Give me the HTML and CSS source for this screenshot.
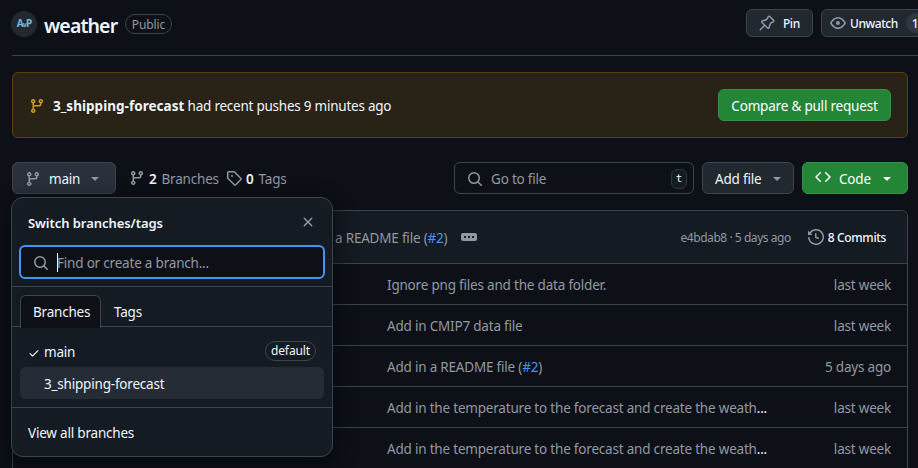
FILE: index.html
```html
<!DOCTYPE html>
<html lang="en">
<head>
<meta charset="utf-8">
<title>weather</title>
<link rel="stylesheet" href="styles.css">
</head>
<body>
<svg class="sprite" aria-hidden="true">
  <symbol id="branch" viewBox="0 0 16 16"><path d="M9.5 3.25a2.25 2.25 0 1 1 3 2.122V6A2.5 2.5 0 0 1 10 8.5H6a1 1 0 0 0-1 1v1.128a2.251 2.251 0 1 1-1.5 0V5.372a2.25 2.25 0 1 1 1.5 0v1.836A2.493 2.493 0 0 1 6 7h4a1 1 0 0 0 1-1v-.628A2.25 2.25 0 0 1 9.5 3.25Zm-6 0a.75.75 0 1 0 1.5 0 .75.75 0 0 0-1.5 0Zm8.25-.75a.75.75 0 1 0 0 1.5.75.75 0 0 0 0-1.5ZM4.25 12a.75.75 0 1 0 0 1.5.75.75 0 0 0 0-1.5Z"/></symbol>
  <symbol id="search" viewBox="0 0 16 16"><path d="M10.68 11.74a6 6 0 0 1-7.922-8.982 6 6 0 0 1 8.982 7.922l3.04 3.04a.749.749 0 0 1-.326 1.275.749.749 0 0 1-.734-.215ZM11.5 7a4.499 4.499 0 1 0-8.997 0A4.499 4.499 0 0 0 11.5 7Z"/></symbol>
  <symbol id="tag" viewBox="0 0 16 16"><path d="M1 7.775V2.75C1 1.784 1.784 1 2.75 1h5.025c.464 0 .91.184 1.238.513l6.25 6.25a1.75 1.75 0 0 1 0 2.474l-5.026 5.026a1.75 1.75 0 0 1-2.474 0l-6.25-6.25A1.752 1.752 0 0 1 1 7.775Zm1.5 0c0 .066.026.13.073.177l6.25 6.25a.25.25 0 0 0 .354 0l5.025-5.025a.25.25 0 0 0 0-.354l-6.25-6.25a.25.25 0 0 0-.177-.073H2.75a.25.25 0 0 0-.25.25ZM6 5a1 1 0 1 1 0 2 1 1 0 0 1 0-2Z"/></symbol>
  <symbol id="pin" viewBox="0 0 16 16"><path d="m11.294.984 3.722 3.722a1.75 1.75 0 0 1-.504 2.826l-1.327.613a3.089 3.089 0 0 0-1.707 2.084l-.584 2.454c-.317 1.332-1.972 1.8-2.94.832L5.75 11.311 1.78 15.28a.749.749 0 1 1-1.06-1.06l3.969-3.97-2.204-2.204c-.968-.968-.5-2.623.832-2.94l2.454-.584a3.08 3.08 0 0 0 2.084-1.707l.613-1.327a1.75 1.75 0 0 1 2.826-.504ZM6.283 9.723l2.732 2.731a.25.25 0 0 0 .42-.119l.584-2.454a4.586 4.586 0 0 1 2.537-3.098l1.328-.613a.25.25 0 0 0 .072-.404l-3.722-3.722a.25.25 0 0 0-.404.072l-.613 1.328a4.584 4.584 0 0 1-3.098 2.537l-2.454.584a.25.25 0 0 0-.119.42l2.731 2.732Z"/></symbol>
  <symbol id="eye" viewBox="0 0 16 16"><path d="M8 2c1.981 0 3.671.992 4.933 2.078 1.27 1.091 2.187 2.345 2.637 3.023a1.62 1.62 0 0 1 0 1.798c-.45.678-1.367 1.932-2.637 3.023C11.67 13.008 9.981 14 8 14c-1.981 0-3.671-.992-4.933-2.078C1.797 10.83.88 9.576.43 8.898a1.62 1.62 0 0 1 0-1.798c.45-.677 1.367-1.931 2.637-3.022C4.33 2.992 6.019 2 8 2ZM1.679 7.932a.12.12 0 0 0 0 .136c.411.622 1.241 1.75 2.366 2.717C5.176 11.758 6.527 12.5 8 12.5c1.473 0 2.825-.742 3.955-1.715 1.124-.967 1.954-2.096 2.366-2.717a.12.12 0 0 0 0-.136c-.412-.621-1.242-1.75-2.366-2.717C10.824 4.242 9.473 3.5 8 3.5c-1.473 0-2.825.742-3.955 1.715-1.124.967-1.954 2.096-2.366 2.717ZM8 10a2 2 0 1 1-.001-3.999A2 2 0 0 1 8 10Z"/></symbol>
  <symbol id="history" viewBox="0 0 16 16"><path d="m.427 1.927 1.215 1.215a8.002 8.002 0 1 1-1.6 5.685.75.75 0 1 1 1.493-.154 6.5 6.5 0 1 0 1.18-4.458l1.358 1.358A.25.25 0 0 1 3.896 6H.25A.25.25 0 0 1 0 5.75V2.104a.25.25 0 0 1 .427-.177ZM7.75 4a.75.75 0 0 1 .75.75v2.992l2.028.812a.75.75 0 0 1-.557 1.392l-2.5-1A.751.751 0 0 1 7 8.25v-3.5A.75.75 0 0 1 7.75 4Z"/></symbol>
  <symbol id="caret" viewBox="0 0 16 16"><path d="m4.427 7.427 3.396 3.396a.25.25 0 0 0 .354 0l3.396-3.396A.25.25 0 0 0 11.396 7H4.604a.25.25 0 0 0-.177.427Z"/></symbol>
  <symbol id="code" viewBox="0 0 16 16"><path d="m11.28 3.22 4.25 4.25a.75.75 0 0 1 0 1.06l-4.25 4.25a.749.749 0 1 1-1.06-1.06L13.94 8l-3.72-3.72a.749.749 0 1 1 1.06-1.06Zm-6.56 0a.751.751 0 0 1 1.06 1.06L2.06 8l3.72 3.72a.749.749 0 1 1-1.06 1.06L.47 8.53a.75.75 0 0 1 0-1.06Z"/></symbol>
  <symbol id="close" viewBox="0 0 16 16"><path d="M3.72 3.72a.75.75 0 0 1 1.06 0L8 6.94l3.22-3.22a.749.749 0 1 1 1.06 1.06L9.06 8l3.22 3.22a.749.749 0 1 1-1.06 1.06L8 9.06l-3.22 3.22a.749.749 0 1 1-1.06-1.06L6.94 8 3.72 4.78a.75.75 0 0 1 0-1.06Z"/></symbol>
  <symbol id="check" viewBox="0 0 16 16"><path d="M13.78 4.22a.75.75 0 0 1 0 1.06l-7.25 7.25a.75.75 0 0 1-1.06 0L2.22 9.28a.751.751 0 0 1 1.06-1.06L6 10.94l6.72-6.72a.75.75 0 0 1 1.06 0Z"/></symbol>
</svg>

<header class="repo-head">
  <span class="avatar">A<small>v</small>P</span>
  <h1 class="repo-name">weather</h1>
  <span class="pill public">Public</span>
  <div class="head-actions">
    <button class="btn small pin"><svg class="icon"><use href="#pin"/></svg>Pin</button>
    <button class="btn small watch"><svg class="icon"><use href="#eye"/></svg>Unwatch<span class="counter">1</span></button>
  </div>
</header>

<section class="banner">
  <svg class="icon"><use href="#branch"/></svg>
  <p><b>3_shipping-forecast</b> had recent pushes 9 minutes ago</p>
  <button class="btn primary compare">Compare &amp; pull request</button>
</section>

<div class="toolbar">
  <div class="picker">
    <button class="btn main-btn"><svg class="icon"><use href="#branch"/></svg>main<svg class="icon caret"><use href="#caret"/></svg></button>
    <div class="popup">
      <div class="popup-head"><strong>Switch branches/tags</strong><svg class="icon"><use href="#close"/></svg></div>
      <div class="find"><svg class="icon"><use href="#search"/></svg><i class="cursor"></i><span>Find or create a branch...</span></div>
      <div class="tabs"><span class="tab active">Branches</span><span class="tab">Tags</span></div>
      <ul class="branches">
        <li><svg class="icon"><use href="#check"/></svg><span>main</span><span class="pill default">default</span></li>
        <li class="hover"><span>3_shipping-forecast</span></li>
      </ul>
      <div class="view-all">View all branches</div>
    </div>
  </div>
  <a class="stat branches-stat"><svg class="icon"><use href="#branch"/></svg><b>2</b> Branches</a>
  <a class="stat tags-stat"><svg class="icon"><use href="#tag"/></svg><b>0</b> Tags</a>
  <div class="goto"><svg class="icon"><use href="#search"/></svg><span>Go to file</span><kbd>t</kbd></div>
  <button class="btn add">Add file<svg class="icon caret"><use href="#caret"/></svg></button>
  <button class="btn primary code"><svg class="icon"><use href="#code"/></svg>Code<svg class="icon caret"><use href="#caret"/></svg></button>
</div>

<section class="files">
  <div class="latest">
    <span class="message">a README file (<a>#2</a>)</span>
    <span class="more"><i></i><i></i><i></i></span>
    <span class="sha">e4bdab8 · 5 days ago</span>
    <span class="commits"><svg class="icon"><use href="#history"/></svg>8 Commits</span>
  </div>
  <div class="row"><span>Ignore png files and the data folder.</span><time>last week</time></div>
  <div class="row"><span>Add in CMIP7 data file</span><time>last week</time></div>
  <div class="row"><span>Add in a README file (<a>#2</a>)</span><time>5 days ago</time></div>
  <div class="row"><span>Add in the temperature to the forecast and create the weath<em>...</em></span><time>last week</time></div>
  <div class="row"><span>Add in the temperature to the forecast and create the weath<em>...</em></span><time>last week</time></div>
</section>
</body>
</html>
```
FILE: styles.css
```css
* { box-sizing: border-box; }
html { height: 468px; overflow: hidden; }
body {
  margin: 0;
  height: 468px;
  overflow: hidden;
  background: #0d1117;
  color: #f0f6fc;
  font: 13.5px/20px "Noto Sans", sans-serif;
  letter-spacing: -0.2px;
  white-space: nowrap;
}
.sprite { display: none; }
.icon { width: 16px; height: 16px; flex: none; fill: #9198a1; }
p, h1, ul { margin: 0; padding: 0; }
a { color: #4493f8; }

.btn {
  display: flex;
  align-items: center;
  height: 32px;
  padding: 0;
  border: 1px solid #3d444d;
  border-radius: 6px;
  background: #212830;
  color: #f0f6fc;
  font: 400 13.5px/20px "Noto Sans", sans-serif;
  letter-spacing: -0.2px;
}
.btn.primary { background: #238636; border-color: #36914a; color: #fff; }
.btn.primary .icon { fill: #fff; }
.pill { border: 1px solid #3d444d; border-radius: 10px; font-size: 12px; line-height: 18px; text-align: center; letter-spacing: -0.1px; }

.repo-head {
  display: flex;
  align-items: flex-start;
  height: 56px;
  margin-left: 12px;
  border-bottom: 1px solid #3d444d;
}
.avatar {
  width: 26px;
  height: 26px;
  margin: 11px 0 0 -1px;
  border-radius: 50%;
  background: #24292f;
  color: #79b8d1;
  font: bold 10px/25px "Noto Sans", sans-serif;
  text-align: center;
  letter-spacing: -0.8px;
}
.avatar small { font-size: 7px; }
.repo-name { width: 81px; margin: 11px 0 0 7px; font-size: 19.5px; line-height: 30px; font-weight: 600; letter-spacing: -0.85px; }
.public { width: 47px; line-height: 19px; height: 20px; margin-top: 14px; color: #9198a1; }
.head-actions { display: flex; gap: 8px; margin: 9px 0 0 auto; width: 172px; }
.btn.small { height: 28px; font-size: 12px; font-weight: 500; letter-spacing: -0.45px; flex: none; padding-top: 1px; }
.btn.small .icon { margin-top: -1px; }
.pin { width: 67px; padding-left: 12px; gap: 8px; }
.watch { width: 120px; padding-left: 8px; gap: 4px; }
.counter { width: 20px; height: 20px; margin: -1px 0 0 4px; padding-left: 6px; border-radius: 10px; background: #2f3742; line-height: 21px; text-align: left; }

.banner {
  display: flex;
  align-items: center;
  height: 66px;
  margin: 16px 10px 0 12px;
  padding: 0 16px;
  border: 1px solid #5c410e;
  border-radius: 6px;
  background: #282217;
}
.banner .icon { fill: #d29922; }
.banner .icon { margin-top: 2px; }
.banner p { margin: 2px 0 0 8px; letter-spacing: -0.24px; }
.banner b { letter-spacing: 0.03px; }
.compare { width: 173px; margin-left: auto; padding-top: 2px; justify-content: center; }

.toolbar { display: flex; margin: 24px 10px 0 12px; height: 32px; }
.picker { position: relative; width: 104px; }
.main-btn { width: 104px; padding: 2px 12px 0 12px; background: #2a313c; }
.main-btn .icon:first-child { margin-right: 8px; }
.btn .caret { margin: -2px 0 0 auto; }
.stat { display: flex; align-items: center; padding-top: 2px; color: #9198a1; }
.stat b { margin: 0 5px 0 4px; color: #f0f6fc; font-weight: 600; }
.stat .icon { margin-top: -3px; }
.branches-stat { width: 97px; margin-left: 13px; }
.tags-stat { width: 60px; }
.goto {
  display: flex;
  align-items: center;
  width: 240px;
  margin-left: auto;
  padding: 2px 6px 0 12px;
  border: 1px solid #3d444d;
  border-radius: 6px;
  color: #9198a1;
}
.goto span { margin-left: 8px; }
.goto kbd { width: 16px; height: 20px; margin: -1px 0 0 auto; border: 1px solid #30363e; border-radius: 6px; background: #151b23; color: #f0f6fc; font: 11px/18px "DejaVu Sans Mono", monospace; text-align: center; }
.add { width: 92px; margin-left: 8px; padding: 2px 8px 0 12px; }
.code { width: 106px; margin-left: 8px; padding: 2px 12px 0 12px; }
.code .icon:first-child { margin: -4px 8px 0 0; }

.popup {
  position: absolute;
  top: 35px;
  left: -1px;
  width: 322px;
  height: 260px;
  border: 1px solid #3d444d;
  border-radius: 12px;
  background: #151b23;
  box-shadow: 0 6px 18px 6px rgba(1, 4, 9, .45);
}
.popup-head { display: flex; align-items: center; justify-content: space-between; height: 48px; padding: 2px 16px 0; font-size: 13px; letter-spacing: -0.05px; }
.popup-head strong { font-weight: 600; }
.popup-head .icon { margin-top: -3px; }
.find { display: flex; align-items: center; height: 34px; margin: -1px 7px 0; padding: 2px 0 0 12px; border: 2px solid #4493f8; border-radius: 6px; background: #0d1117; color: #9198a1; }
.find span { margin-left: -1px; }
.cursor { width: 1px; height: 19px; margin: -1px 0 0 8px; background: #fff; }
.tabs { display: flex; height: 41px; margin-top: 7px; padding: 8px 8px 0; border-top: 1px solid #3d444d; border-bottom: 1px solid #3d444d; }
.tab { height: 33px; padding: 6px 12px 0; border: 1px solid transparent; border-bottom: 0; }
.tab.active { width: 81px; background: #0d1117; border-color: #3d444d; border-radius: 6px 6px 0 0; }
.branches { height: 81px; padding: 8px 8px 0; border-bottom: 1px solid #3d444d; }
.branches li { display: flex; align-items: center; height: 32px; padding: 2px 8px 0; border-radius: 6px; }
.branches .icon { width: 12px; height: 12px; margin: 2px 4px 0 0; fill: #f0f6fc; }
.branches .hover { padding-left: 24px; background: #262c36; }
.default { width: 51px; margin: -3px 0 0 auto; }
.view-all { padding: 15px 16px; }

.files { margin: 16px 10px 0 12px; height: 270px; border: 1px solid #3d444d; border-radius: 6px 6px 0 0; color: #9198a1; }
.latest { display: flex; align-items: center; height: 52px; padding: 1px 21px 0 322px; border-radius: 6px 6px 0 0; background: #151b23; }
.more { display: flex; align-items: center; justify-content: center; gap: 2px; width: 16px; height: 8px; margin: -2px 0 0 14px; border-radius: 2px; background: #9198a1; }
.more i { width: 2px; height: 2px; background: #151b23; }
.sha { margin-left: auto; font-size: 12px; letter-spacing: -0.45px; }
.commits { display: flex; align-items: center; gap: 4px; margin-left: 17px; color: #f0f6fc; font-size: 12px; font-weight: 500; letter-spacing: -0.35px; }
.commits .icon { margin-top: -1px; }
.row { display: flex; justify-content: space-between; height: 41px; padding: 11px 16px 0 374px; border-top: 1px solid #3d444d; }
.row em { color: #f0f6fc; font-style: normal; }
```
